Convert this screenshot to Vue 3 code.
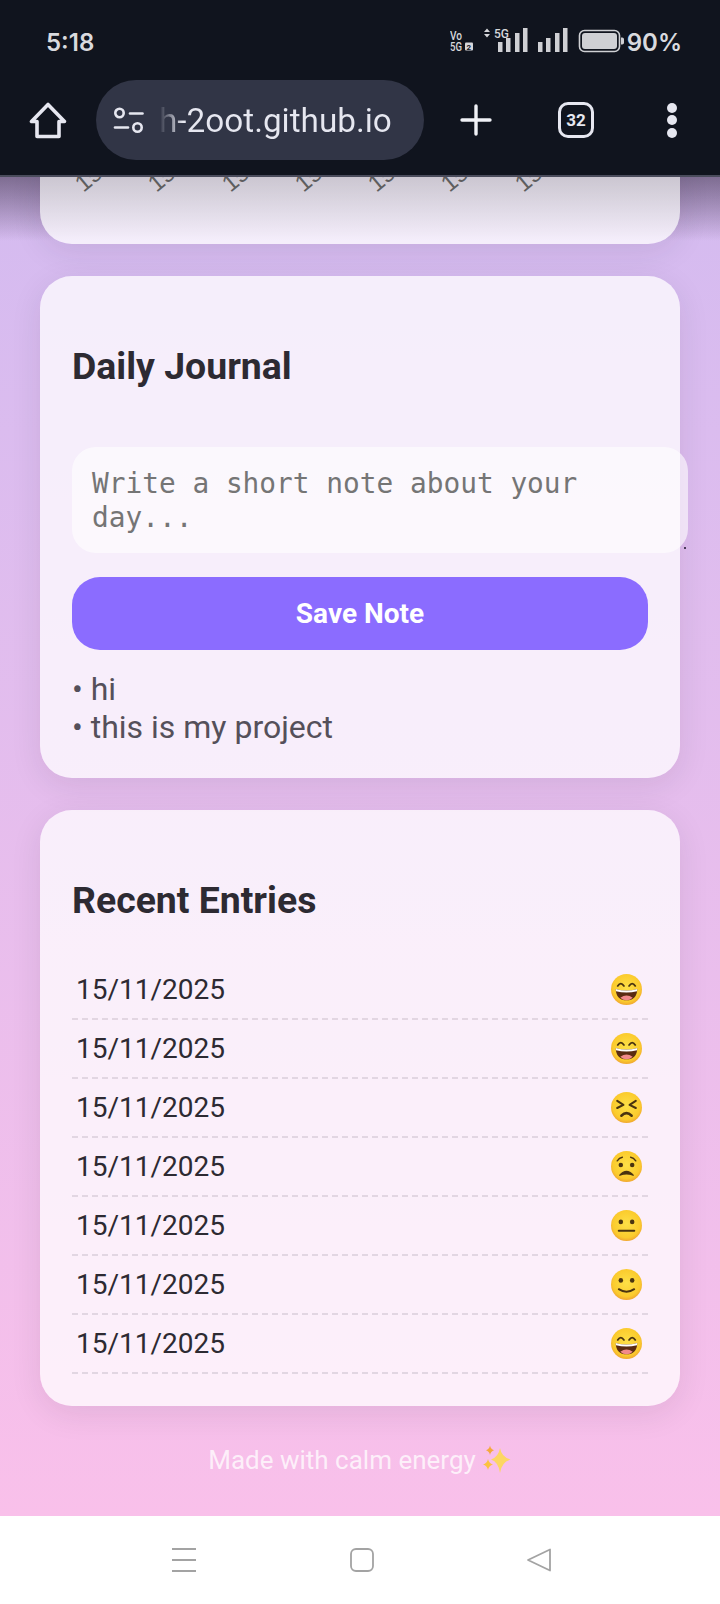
<script setup>
const axisDates = Array.from({ length: 7 }, () => '15/11/2025')
const notes = ['hi', 'this is my project']
const entries = ['grin', 'grin', 'squint', 'worried', 'neutral', 'smile', 'grin']
</script>

<template>
  <div class="phone">
    <header class="chrome">
      <div class="status">
        <span class="clock">5:18</span>
        <div class="status-right">
          <svg class="signals" width="175" height="30" viewBox="0 0 175 30">
            <g class="tiny">
              <text x="0" y="11.500" textLength="12" lengthAdjust="spacingAndGlyphs">Vo</text>
              <text x="0" y="22.500" textLength="12" lengthAdjust="spacingAndGlyphs">5G</text>
            </g>
            <rect x="15" y="14.500" width="8" height="8" rx="1" fill="#d5d6da" />
            <text x="16.600" y="21.500" class="sim">2</text>
            <path d="M37 0.500l3 3.600h-6zM37 9.500l3-3.600h-6z" fill="#d5d6da" />
            <text x="44" y="9.500" class="tiny" textLength="15" lengthAdjust="spacingAndGlyphs">5G</text>
            <g fill="#cfd0d4">
              <rect x="48" y="14" width="4.500" height="10" />
              <rect x="56" y="10" width="4.500" height="14" />
              <rect x="65" y="5" width="4.500" height="19" />
              <rect x="73" y="0" width="4.500" height="24" />
              <rect x="88" y="14" width="4.500" height="10" />
              <rect x="96" y="10" width="4.500" height="14" />
              <rect x="105" y="5" width="4.500" height="19" />
              <rect x="113" y="0" width="4.500" height="24" />
            </g>
            <rect x="129.500" y="2.500" width="40" height="21" rx="5" fill="none" stroke="#cfd0d4" stroke-width="1.600" />
            <rect x="132" y="5" width="35" height="16" rx="3" fill="#cfd0d4" />
            <path d="M171 9.500h1.200a1.800 1.800 0 0 1 1.800 1.800v3.400a1.800 1.800 0 0 1-1.800 1.800H171z" fill="#cfd0d4" />
          </svg>
          <span class="battery-level">90%</span>
        </div>
      </div>
      <div class="toolbar">
        <svg class="home" width="38" height="37" viewBox="0 0 38 37" fill="none" stroke="#e6e7f0" stroke-width="3.600" stroke-linejoin="round">
          <path d="M19 2.500 2.500 19.500H8V34.500H30V19.500H35.500Z" />
        </svg>
        <div class="omnibox">
          <svg width="32" height="27" viewBox="0 0 32 27" fill="none" stroke="#e6e7f0" stroke-width="2.600" stroke-linecap="round">
            <circle cx="6.500" cy="6" r="4.200" />
            <path d="M17 6.500H29.500" />
            <path d="M2 20.500H15" />
            <circle cx="24.500" cy="20.500" r="4.200" />
          </svg>
          <span class="url">h-2oot.github.io</span>
        </div>
        <svg class="plus" width="32" height="32" viewBox="0 0 32 32" stroke="#f0f1f6" stroke-width="3.400" stroke-linecap="round">
          <path d="M16 2V30M2 16H30" />
        </svg>
        <div class="tabs">32</div>
        <div class="menu"><i></i><i></i><i></i></div>
      </div>
    </header>

    <main class="viewport">
      <div class="shade-back"></div>
      <div class="shade-front"></div>

      <section class="card chart-tail">
        <div class="axis">
          <span v-for="(d, i) in axisDates" :key="i" class="tick"><span class="tick-label">{{ d }}</span></span>
        </div>
      </section>

      <section class="card">
        <h2>Daily Journal</h2>
        <div class="note-field">
          <textarea rows="2" placeholder="Write a short note about your day..."></textarea>
          <i class="grip"></i>
        </div>
        <button class="save" type="button">Save Note</button>
        <ul class="notes">
          <li v-for="n in notes" :key="n">• {{ n }}</li>
        </ul>
      </section>

      <section class="card">
        <h2>Recent Entries</h2>
        <ul class="entries">
          <li v-for="(mood, i) in entries" :key="i" class="entry">
            <span>15/11/2025</span>
            <svg class="face" width="33" height="33" viewBox="0 0 32 32">
              <defs>
                <radialGradient id="skin" cx="50%" cy="45%" r="55%">
                  <stop offset="0%" stop-color="#fde047" />
                  <stop offset="80%" stop-color="#fbcb2d" />
                  <stop offset="100%" stop-color="#f0a830" />
                </radialGradient>
              </defs>
              <circle cx="16" cy="16" r="15" fill="url(#skin)" />
              <g v-if="mood === 'grin'">
                <path d="M7.500 12.500q3-4.500 6 0M18.500 12.500q3-4.500 6 0" fill="none" stroke="#4a3410" stroke-width="1.800" stroke-linecap="round" />
                <path d="M5.500 15.500q10.500 3 21 0q-.5 11-10.500 11t-10.500-11z" fill="#5b2c12" />
                <path d="M5.500 15.500q10.500 3 21 0l-.3 2.200q-10.200 2.600-20.400 0z" fill="#fff" />
                <path d="M10 24q6-4.500 12 0q-2.500 2.500-6 2.500t-6-2.500z" fill="#f28a8a" />
              </g>
              <g v-else-if="mood === 'squint'" fill="none" stroke="#4a3410" stroke-width="2" stroke-linecap="round" stroke-linejoin="round">
                <path d="M7 9.500l6 4-6 3" />
                <path d="M25 9.500l-6 4 6 3" />
                <path d="M11 24q5-5 10 0" stroke-width="2.400" />
              </g>
              <g v-else-if="mood === 'worried'" fill="#4a3410">
                <path d="M7 10.500q2-3 5-3.500M25 10.500q-2-3-5-3.500" fill="none" stroke="#4a3410" stroke-width="1.400" stroke-linecap="round" />
                <circle cx="10.500" cy="14.500" r="2.200" />
                <circle cx="21.500" cy="14.500" r="2.200" />
                <path d="M9.500 24.500q6.500-7.500 13 0q-6.500-2.500-13 0z" stroke="#4a3410" stroke-width="1.200" stroke-linejoin="round" />
              </g>
              <g v-else-if="mood === 'neutral'" fill="#4a3410">
                <circle cx="10.500" cy="12.500" r="2.200" />
                <circle cx="21.500" cy="12.500" r="2.200" />
                <rect x="7.500" y="20" width="17" height="2" rx="1" />
              </g>
              <g v-else fill="#4a3410">
                <circle cx="10.500" cy="12" r="2.200" />
                <circle cx="21.500" cy="12" r="2.200" />
                <path d="M8.500 20.500q7.500 5 15 0" fill="none" stroke="#4a3410" stroke-width="1.800" stroke-linecap="round" />
              </g>
            </svg>
          </li>
        </ul>
      </section>

      <footer class="credit">
        <span>Made with calm energy</span>
        <svg width="30" height="30" viewBox="0 0 30 30">
          <path d="M18 3q1.500 9 10.500 11.500Q19.500 17 18 28q-1.500-11-9-13.500Q16.500 12 18 3z" fill="#fdd663" />
          <path d="M8 0.500q.7 3.800 4 4.800-3.300 1-4 4.700-.7-3.700-4-4.700 3.300-1 4-4.800z" fill="#f5a93b" />
          <path d="M6 14q.9 4.300 5 5.500-4.100 1.200-5 5.500-.9-4.300-5-5.500 4.100-1.200 5-5.500z" fill="#fcc23f" />
        </svg>
      </footer>
    </main>

    <nav class="system-nav">
      <svg width="24" height="24" viewBox="0 0 24 24" stroke="#a3a3a3" stroke-width="1.800"><path d="M0 1H24M0 12H24M0 23H24" /></svg>
      <svg width="24" height="24" viewBox="0 0 24 24" fill="none" stroke="#a3a3a3" stroke-width="1.800"><rect x="1" y="1" width="22" height="22" rx="5" /></svg>
      <svg width="24" height="24" viewBox="0 0 24 24" fill="none" stroke="#a3a3a3" stroke-width="1.800" stroke-linejoin="round"><path d="M22 1.500V22.500L0 12Z" /></svg>
    </nav>
  </div>
</template>

<style>
html, body {
  margin: 0;
  background: #fff;
}
</style>

<style scoped>
.phone {
  width: 720px;
  height: 1604px;
  display: flex;
  flex-direction: column;
  overflow: hidden;
  font-family: Roboto, "Noto Sans", sans-serif;
}

/* Browser chrome */
.chrome {
  flex: none;
  height: 175px;
  background: #10141e;
  border-bottom: 2px solid #4a4c5c;
  display: flex;
  flex-direction: column;
  position: relative;
  z-index: 3;
}
.status {
  height: 84px;
  display: flex;
  align-items: center;
  justify-content: space-between;
  padding: 0 38px 0 46px;
  box-sizing: border-box;
  font-family: Inter, sans-serif;
  font-weight: 600;
  font-size: 24px;
  color: #d9dade;
}
.status-right {
  display: flex;
  align-items: center;
  gap: 1.500px;
}
.signals {
  display: block;
  margin-top: 1px;
}
.tiny {
  font-family: Roboto, sans-serif;
  font-size: 13px;
  font-weight: 500;
  fill: #d5d6da;
}
.sim {
  font-family: Roboto, sans-serif;
  font-size: 8px;
  font-weight: 700;
  fill: #10141e;
}
.toolbar {
  display: flex;
  align-items: center;
  height: 80px;
  margin-top: -4px;
  position: relative;
}
.home {
  margin-left: 29px;
  flex: none;
}
.omnibox {
  margin-left: 29px;
  width: 328px;
  height: 80px;
  border-radius: 40px;
  background: #313546;
  display: flex;
  align-items: center;
  padding-left: 17px;
  box-sizing: border-box;
  flex: none;
}
.url {
  margin-left: 14px;
  font-size: 33.300px;
  color: transparent;
  background: linear-gradient(90deg, #313546 0, #e6e7f0 24px);
  -webkit-background-clip: text;
  background-clip: text;
}
.plus {
  margin-left: 36px;
  flex: none;
}
.tabs {
  margin-left: 66px;
  width: 36px;
  height: 36px;
  box-sizing: border-box;
  border: 3.500px solid #e6e7f0;
  border-radius: 10px;
  color: #e6e7f0;
  font-size: 17px;
  font-weight: 700;
  display: flex;
  align-items: center;
  justify-content: center;
  flex: none;
}
.menu {
  margin-left: 73px;
  display: flex;
  flex-direction: column;
  gap: 2.500px;
  flex: none;
}
.menu i {
  width: 10px;
  height: 10px;
  border-radius: 50%;
  background: #e6e7f0;
}

/* Scrolled page area: content sits against the bottom edge and runs off the top */
.viewport {
  flex: 1;
  min-height: 0;
  position: relative;
  overflow: hidden;
  display: flex;
  flex-direction: column;
  justify-content: flex-end;
  align-items: center;
  background: linear-gradient(180deg, #d4bbf0 0%, #f9c0ea 100%);
}
/* Toolbar drop shadow: heavier on the page background than on the cards */
.shade-back,
.shade-front {
  position: absolute;
  left: 0;
  right: 0;
  top: 0;
  height: 64px;
  pointer-events: none;
}
.shade-back {
  z-index: 0;
  background: linear-gradient(180deg, rgba(30, 20, 40, 0.4), rgba(30, 20, 40, 0));
}
.shade-front {
  z-index: 2;
  background: linear-gradient(180deg, rgba(20, 16, 30, 0.11), rgba(20, 16, 30, 0));
}
.card {
  flex: none;
  width: 640px;
  box-sizing: border-box;
  padding: 32px;
  margin-bottom: 32px;
  border-radius: 32px;
  background: rgba(255, 255, 255, 0.75);
  box-shadow: 0 8px 32px rgba(30, 20, 40, 0.09);
  position: relative;
  z-index: 1;
}
.chart-tail {
  height: 100px;
  padding: 0;
}
.axis {
  display: flex;
  padding: 20px 0 0 46px;
}
.tick {
  flex: none;
  width: 73.300px;
  height: 0;
  position: relative;
}
.tick-label {
  position: absolute;
  left: 0;
  bottom: -32px;
  transform-origin: 0 100%;
  transform: rotate(-40deg);
  font-family: "Liberation Sans", sans-serif;
  font-size: 24px;
  line-height: 24px;
  color: #666;
  white-space: nowrap;
}
h2 {
  margin: 36px 0 0;
  font-size: 37.400px;
  line-height: 44px;
  font-weight: 700;
  color: #2d2a32;
}
.note-field {
  margin-top: 59px;
  position: relative;
  height: 106px;
}
.entries {
  margin-top: 39px;
}
textarea {
  display: block;
  width: 100%;
  box-sizing: content-box;
  padding: 20px 20px 18px;
  height: 68px;
  border: 0;
  outline: 0;
  border-radius: 24px;
  background: rgba(255, 255, 255, 0.6);
  font-family: "DejaVu Sans Mono", monospace;
  font-size: 27.800px;
  line-height: 34px;
  color: #333;
  resize: none;
  overflow: hidden;
}
textarea::placeholder {
  color: #757575;
  opacity: 1;
}
.grip {
  position: absolute;
  left: 612px;
  top: 100px;
  width: 2px;
  height: 2px;
  background: #4a3a5a;
  z-index: 1;
}
.save {
  display: block;
  width: 100%;
  height: 73px;
  margin-top: 24px;
  border: 0;
  border-radius: 28px;
  background: #8b6cff;
  color: #fff;
  font-family: inherit;
  font-size: 28px;
  font-weight: 700;
}
ul {
  list-style: none;
  margin: 0;
  padding: 0;
}
.notes {
  margin-top: 20px;
  font-size: 32px;
  line-height: 38px;
  color: #55505a;
}
.entry {
  height: 59px;
  box-sizing: border-box;
  display: flex;
  align-items: center;
  justify-content: space-between;
  padding: 0 5px 0 4px;
  border-bottom: 2px dashed #e2d6e2;
  font-size: 28px;
  color: #2d2a32;
}
.face {
  display: block;
  flex: none;
}
.credit {
  flex: none;
  height: 78px;
  display: flex;
  justify-content: center;
  align-items: flex-start;
  gap: 6px;
  padding-top: 7px;
  box-sizing: border-box;
  font-size: 26px;
  line-height: 30px;
  color: rgba(255, 255, 255, 0.75);
}
.credit svg {
  display: block;
}

/* Android navigation */
.system-nav {
  flex: none;
  height: 88px;
  background: #fff;
  display: flex;
  align-items: flex-start;
  padding: 32px 0 0 172px;
  box-sizing: border-box;
  gap: 154px;
}
.system-nav svg {
  display: block;
  overflow: visible;
}
</style>
